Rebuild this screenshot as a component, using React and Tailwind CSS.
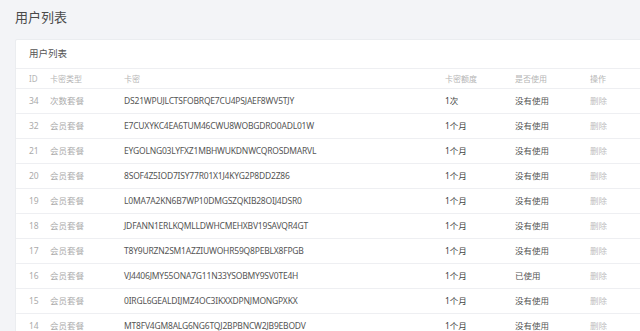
const rows = [
  { id: 34, type: '次数套餐', code: 'DS21WPUJLCTSFOBRQE7CU4PSJAEF8WV5TJY', amount: '1次', used: '没有使用' },
  { id: 32, type: '会员套餐', code: 'E7CUXYKC4EA6TUM46CWU8WOBGDRO0ADL01W', amount: '1个月', used: '没有使用' },
  { id: 21, type: '会员套餐', code: 'EYGOLNG03LYFXZ1MBHWUKDNWCQROSDMARVL', amount: '1个月', used: '没有使用' },
  { id: 20, type: '会员套餐', code: '8SOF4Z5IOD7ISY77R01X1J4KYG2P8DD2Z86', amount: '1个月', used: '没有使用' },
  { id: 19, type: '会员套餐', code: 'L0MA7A2KN6B7WP10DMGSZQKIB28OIJ4DSR0', amount: '1个月', used: '没有使用' },
  { id: 18, type: '会员套餐', code: 'JDFANN1ERLKQMLLDWHCMEHXBV19SAVQR4GT', amount: '1个月', used: '没有使用' },
  { id: 17, type: '会员套餐', code: 'T8Y9URZN2SM1AZZIUWOHR59Q8PEBLX8FPGB', amount: '1个月', used: '没有使用' },
  { id: 16, type: '会员套餐', code: 'VJ4406JMY55ONA7G11N33YSOBMY9SV0TE4H', amount: '1个月', used: '已使用' },
  { id: 15, type: '会员套餐', code: '0IRGL6GEALDIJMZ4OC3IKXXDPNJMONGPXKX', amount: '1个月', used: '没有使用' },
  { id: 14, type: '会员套餐', code: 'MT8FV4GM8ALG6NG6TQJ2BPBNCW2JB9EBODV', amount: '1个月', used: '没有使用' },
]

const cols = 'grid grid-cols-[21px_74px_321px_70px_75px_1fr]'

export default function App() {
  return (
    <div
      className="w-[640px] h-[331px] overflow-hidden bg-[#f3f4f7]"
      style={{ fontFamily: '"Noto Sans", "Noto Sans CJK SC", sans-serif' }}
    >
      {/* Page title */}
      <div className="h-[39px] pl-[15px] pb-[4px] flex items-center">
        <h1 className="text-[13px] leading-none text-[#4a4a4a] font-normal">用户列表</h1>
      </div>

      {/* Card */}
      <div className="ml-[15px] w-[660px] bg-white border border-[#ebedf0] rounded-[2px]">
        <div className="h-[29px] pl-[13px] flex items-center border-b border-[#eeeff2]">
          <span className="text-[9.5px] text-[#555]">用户列表</span>
        </div>

        {/* Table header */}
        <div className={`${cols} h-[20px] items-center pl-[13px] border-b border-[#eeeff2] text-[8px] text-[#b5b5b5]`}>
          <span>ID</span>
          <span>卡密类型</span>
          <span>卡密</span>
          <span>卡密额度</span>
          <span>是否使用</span>
          <span>操作</span>
        </div>

        {/* Rows */}
        {rows.map((r) => (
          <div
            key={r.id}
            className={`${cols} h-[25px] items-center pl-[13px] border-b border-[#eeeff2] text-[8.5px]`}
          >
            <span className="text-[#aaa]">{r.id}</span>
            <span className="text-[#aaa]">{r.type}</span>
            <span className="text-[#555] tracking-[-0.2px]">{r.code}</span>
            <span className="text-[#444]">{r.amount}</span>
            <span className="text-[#555]">{r.used}</span>
            <span className="text-[#c0c0c0]">删除</span>
          </div>
        ))}
      </div>
    </div>
  )
}
